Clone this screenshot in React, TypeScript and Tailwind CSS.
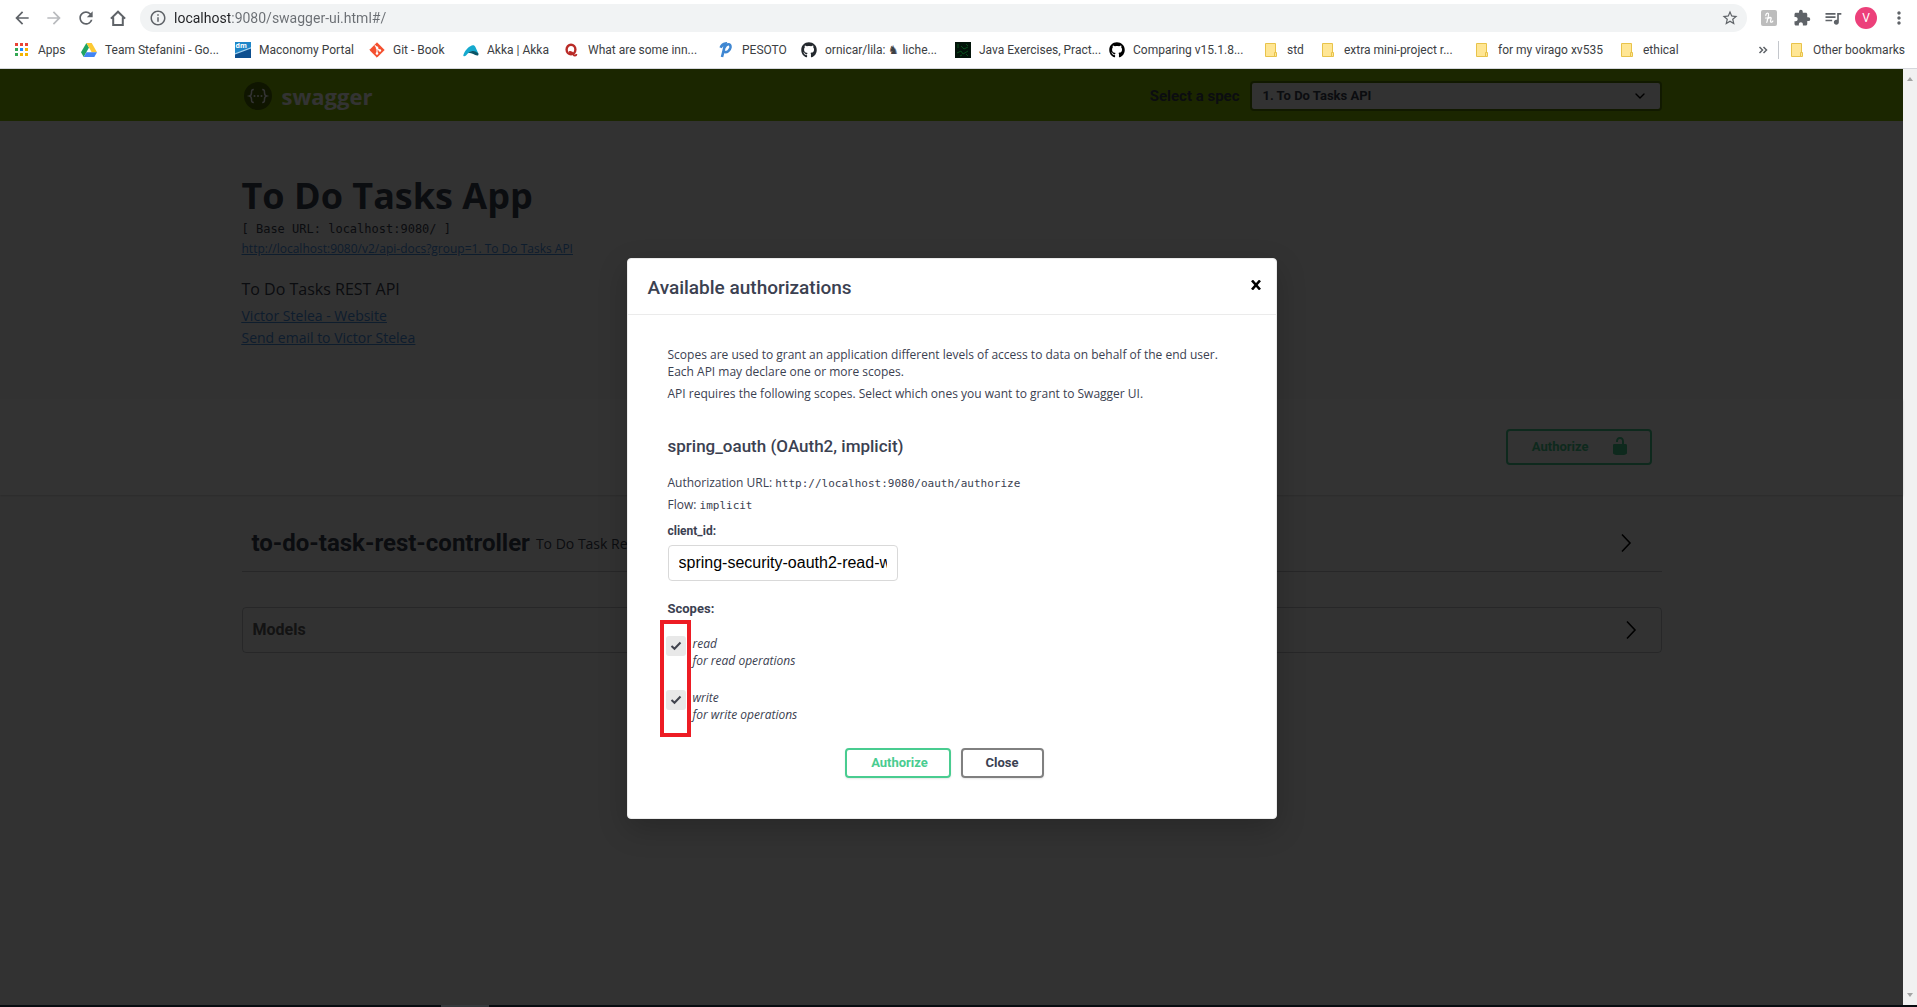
import type { ReactNode } from "react";
import {
  MdArrowBack,
  MdArrowForward,
  MdRefresh,
  MdInfoOutline,
  MdStarBorder,
  MdExtension,
  MdQueueMusic,
  MdMoreVert,
} from "react-icons/md";
import { FaGithub } from "react-icons/fa";
import { ChevronDown } from "lucide-react";

const HomeIcon = () => (
  <svg viewBox="0 0 16 16" className="size-4" fill="none" stroke="#5f6368" strokeWidth="2">
    <path d="M.9 8.6 8 1.7l7.1 6.9M3.2 7.2V15h9.6V7.2" />
  </svg>
);

const AppsIcon = () => (
  <svg viewBox="0 0 16 16" className="size-4">
    {["#ea4335", "#ea4335", "#ea4335", "#34a853", "#1a8cff", "#f4b400", "#34a853", "#f4b400", "#f4b400"].map((c, i) => (
      <rect key={i} x={1 + (i % 3) * 5} y={1 + Math.floor(i / 3) * 5} width="3" height="3" fill={c} />
    ))}
  </svg>
);

const DriveIcon = () => (
  <svg viewBox="0 0 16 16" className="size-4">
    <path d="M5.4 1 0 10.3 2.7 15 8 5.6z" fill="#1fa463" />
    <path d="M5.4 1h5.3L16 10.2h-5.3z" fill="#fcc934" />
    <path d="M2.7 15 5.4 10.2H16L13.3 15z" fill="#4285f4" />
  </svg>
);

const MaconomyIcon = () => (
  <svg viewBox="0 0 16 16" className="size-4">
    <rect width="16" height="16" fill="#1e86c8" />
    <path d="M0 11.5 16 6v10H0z" fill="#0d4f8f" />
    <path d="M0 11.2 16 5.2v1.4L0 12.4z" fill="#a9d6f2" />
    <text x="0.5" y="6" fontSize="7" fontWeight="700" fill="#fff" fontFamily="Open Sans, sans-serif">dm</text>
  </svg>
);

const GitIcon = () => (
  <svg viewBox="0 0 16 16" className="size-4">
    <path d="M8 0.8 15.2 8 8 15.2 0.8 8z" fill="#f4502f" stroke="#f4502f" strokeLinejoin="round" />
    <path d="M5.8 3.4 8 5.6V11.6M8 6l2.8 2.6" stroke="#fff" strokeWidth="1.1" fill="none" />
    <circle cx="8" cy="5.7" r="1.3" fill="#fff" />
    <circle cx="8" cy="11.5" r="1.3" fill="#fff" />
    <circle cx="10.9" cy="8.5" r="1.3" fill="#fff" />
  </svg>
);

const AkkaIcon = () => (
  <svg viewBox="0 0 16 16" className="size-4">
    <path d="M.3 13.2C2 7.5 7 3.5 9.8 3.2c1.5 0 2 .6 2.6 1.8L15.600 12C12 8.500 6.500 8.500 3 13.400 1.800 14.600.200 14.400.3 13.200z" fill="#15a9ce" />
    <path d="M5.2 10.800C9 7.900 13 8.500 15.200 11.300c.8 1.300.1 2.500-1.100 2.300C11.500 13.200 9.500 11 5.200 10.800z" fill="#0b5567" />
  </svg>
);

const QuoraIcon = () => (
  <svg viewBox="0 0 16 16" className="size-4" fill="none" stroke="#b92b27">
    <ellipse cx="7" cy="7.500" rx="4.400" ry="4.700" strokeWidth="2.400" />
    <path d="M5 10.200c2.400-.8 3.600.7 4.400 2.300.7 1.500 2.700 1.600 3.100-.5" strokeWidth="1.800" />
  </svg>
);

const PesotoIcon = () => (
  <svg viewBox="0 0 16 16" className="size-4" fill="none" stroke="#3f87d2">
    <path d="M2.600 5.800C3.500 3.600 5.200 2 7.400 1.600 6.400 5 5.200 10.500 4 15" strokeWidth="2.600" />
    <path d="M6.500 5.500c2-4.500 6.500-4.200 6-.3C12 8.500 9 11 5.800 9.800" strokeWidth="2.600" />
  </svg>
);

const JavaExercisesIcon = () => (
  <svg viewBox="0 0 16 16" className="size-4">
    <rect width="16" height="16" fill="#03140a" />
    <path d="M3 2v4M6 4l3 3 4-2M2 11l4-2 2 3 5-3M5 14l2-1M11 2l2 2M11 12l2 2" stroke="#0a4f1d" fill="none" />
  </svg>
);

const FolderIcon = () => (
  <svg viewBox="0 0 16 16" className="size-4">
    <path d="M2.500 1.500h10v13h-10z" fill="#ffe694" stroke="#e8c34a" />
    <path d="M11.500 10.500h2v4h-2z" fill="#ffe694" stroke="#e8c34a" />
  </svg>
);

const HoneyIcon = () => (
  <svg viewBox="0 0 16 16" className="size-4">
    <rect width="16" height="16" rx="2" fill="#bdbdbd" />
    <path d="M4.800 5.600C4.800 3.500 6.300 2.600 7.300 3.400 8.200 4.600 6.800 8.500 5.800 12.400M6.300 9.500c1.500-2.400 3.900-2.800 3.900-1.300 0 1-1.200 2.600-.6 3.700.6.700 1.700.1 2.200-.8M4.500 8h5" stroke="#fff" strokeWidth="1.200" fill="none" strokeLinecap="round" />
  </svg>
);

const SwaggerMark = () => (
  <svg viewBox="0 0 28 28" className="size-7">
    <circle cx="14" cy="14" r="14" fill="#4a6a02" />
    <g fill="none" stroke="#fff" strokeWidth="1.500">
      <path d="M9.800 7.500c-2.300 0-2.300 1-2.300 3.200 0 2-.3 2.800-2 3.300 1.700.5 2 1.300 2 3.300 0 2.200 0 3.200 2.300 3.200" />
      <path d="M18.200 7.500c2.300 0 2.300 1 2.300 3.200 0 2 .3 2.800 2 3.300-1.700.5-2 1.300-2 3.300 0 2.200 0 3.200-2.300 3.200" />
    </g>
    <g fill="#fff">
      <circle cx="10.500" cy="14" r="1" />
      <circle cx="14" cy="14" r="1" />
      <circle cx="17.500" cy="14" r="1" />
    </g>
  </svg>
);

const ArrowRight = () => (
  <svg viewBox="0 0 20 20" className="size-5" fill="none" stroke="#000" strokeWidth="1.600">
    <path d="M6 1.500 14 10 6 18.500" />
  </svg>
);

type Bookmark = { label: ReactNode; icon: ReactNode; width: string };

const bookmarks: Bookmark[] = [
  { label: "Apps", icon: <AppsIcon />, width: "w-[67px]" },
  { label: "Team Stefanini - Go...", icon: <DriveIcon />, width: "w-[154px]" },
  { label: "Maconomy Portal", icon: <MaconomyIcon />, width: "w-[134px]" },
  { label: "Git - Book", icon: <GitIcon />, width: "w-[94px]" },
  { label: "Akka | Akka", icon: <AkkaIcon />, width: "w-[101px]" },
  { label: "What are some inn...", icon: <QuoraIcon />, width: "w-[154px]" },
  { label: "PESOTO", icon: <PesotoIcon />, width: "w-[83px]" },
  { label: "ornicar/lila: ♞ liche...", icon: <FaGithub className="size-4 text-[#24292e]" />, width: "w-[154px]" },
  { label: "Java Exercises, Pract...", icon: <JavaExercisesIcon />, width: "w-[154px]" },
  { label: "Comparing v15.1.8...", icon: <FaGithub className="size-4 text-black" />, width: "w-[154px]" },
  { label: "std", icon: <FolderIcon />, width: "w-[57px]" },
  { label: "extra mini-project r...", icon: <FolderIcon />, width: "w-[154px]" },
  { label: "for my virago xv535", icon: <FolderIcon />, width: "w-[145px]" },
  { label: "ethical", icon: <FolderIcon />, width: "w-[60px]" },
];

function BrowserChrome() {
  return (
    <div className="border-b border-[#d5d7dc] bg-white font-['Roboto',sans-serif] text-[#3c4043]">
      <div className="flex h-9 items-center pr-2 pl-3">
        <div className="flex shrink-0 items-center gap-3 text-[#5f6368]">
          <button aria-label="Back"><MdArrowBack className="size-5" /></button>
          <button aria-label="Forward" className="text-[#b9bbbe]"><MdArrowForward className="size-5" /></button>
          <button aria-label="Reload"><MdRefresh className="size-5" /></button>
          <button aria-label="Home" className="flex w-5 justify-center"><HomeIcon /></button>
        </div>
        <div className="ml-3 flex h-7 flex-1 items-center rounded-full bg-[#f1f3f4] pr-2 pl-[9px] text-[#5f6368]">
          <MdInfoOutline className="size-[18px] shrink-0" />
          <input
            aria-label="Address"
            defaultValue="localhost:9080/swagger-ui.html#/"
            className="ml-[7px] min-w-0 flex-1 bg-[linear-gradient(90deg,#202124_56px,#6a6e73_56px)] bg-clip-text text-[14px] text-transparent outline-none"
          />
          <button aria-label="Bookmark this page"><MdStarBorder className="size-[18px]" /></button>
        </div>
        <div className="ml-3.5 flex shrink-0 items-center text-[#5f6368]">
          <button aria-label="Honey"><HoneyIcon /></button>
          <button aria-label="Extensions" className="ml-4"><MdExtension className="size-[18px]" /></button>
          <button aria-label="Media" className="ml-3"><MdQueueMusic className="size-5" /></button>
          <button aria-label="Profile" className="ml-3 flex size-[22px] items-center justify-center rounded-full bg-[#ec407a] text-[12px] text-white">V</button>
          <button aria-label="Menu" className="ml-3"><MdMoreVert className="size-5" /></button>
        </div>
      </div>
      <nav className="flex h-8 items-center pb-1 text-[12px]">
        <div className="flex min-w-0 flex-1 pl-3.5">
          {bookmarks.map((b, i) => (
            <a key={i} href="#" className={`flex shrink-0 items-center gap-2 whitespace-nowrap ${b.width}`}>
              <span className="shrink-0">{b.icon}</span>
              <span>{b.label}</span>
            </a>
          ))}
        </div>
        <button aria-label="More bookmarks" className="mr-2.5">
          <svg viewBox="0 0 10 8" className="h-2 w-2.5" fill="none" stroke="#5f6368" strokeWidth="1.500">
            <path d="M1.500 1 4.500 4 1.500 7M5.500 1 8.500 4 5.500 7" />
          </svg>
        </button>
        <a href="#" className="flex items-center gap-2 border-l border-[#c4c7cc] pr-3 pl-2.5 whitespace-nowrap">
          <FolderIcon />
          Other bookmarks
        </a>
      </nav>
    </div>
  );
}

function SwaggerPage() {
  return (
    <div className="h-full bg-[#fafafa] text-[#3b4151]">
      <header className="bg-[#89bf04]">
        <div className="mx-auto flex h-[52px] max-w-[1460px] items-center justify-between px-5 pt-0.5">
          <a href="#" className="flex items-center gap-2.5 pl-0.5 font-['Open_Sans',sans-serif] text-[22px] font-bold text-white">
            <SwaggerMark />
            swagger
          </a>
          <div className="flex items-center gap-2.5">
            <label htmlFor="spec" className="font-['Roboto',sans-serif] text-[15px] font-bold">Select a spec</label>
            <div className="relative">
              <select
                id="spec"
                className="block h-[30px] w-[412px] appearance-none rounded-sm border-2 border-[#547f00] bg-[#f7f7f7] pl-[11px] font-['Roboto',sans-serif] text-[13px] font-bold"
              >
                <option>1. To Do Tasks API</option>
              </select>
              <ChevronDown className="pointer-events-none absolute top-[7px] right-3.5 size-4 text-black" />
            </div>
          </div>
        </div>
      </header>

      <section className="mx-auto max-w-[1460px] px-5 pt-[50px] pb-[50px] font-['Open_Sans',sans-serif]">
        <h1 className="text-[36px] leading-[50px] font-bold">To Do Tasks App</h1>
        <pre className="font-['DejaVu_Sans_Mono',monospace] text-[12px] leading-4">[ Base URL: localhost:9080/ ]</pre>
        <a href="#" className="block w-fit text-[12px] leading-6 text-[#4990e2] underline">http://localhost:9080/v2/api-docs?group=1. To Do Tasks API</a>
        <p className="mt-4 text-[16px] leading-6">To Do Tasks REST API</p>
        <div className="mt-1 text-[14px] leading-[22px] text-[#4990e2] underline">
          <a href="#" className="block w-fit">Victor Stelea - Website</a>
          <a href="#" className="block w-fit">Send email to Victor Stelea</a>
        </div>
      </section>

      <section className="bg-white shadow-[0_1px_2px_rgba(0,0,0,0.15)]">
        <div className="mx-auto flex max-w-[1460px] justify-end px-5 py-[30px]">
          <button className="mr-2.5 flex h-9 items-center gap-[21px] rounded border-2 border-[#49cc90] pr-5 pl-6 font-['Roboto',sans-serif] text-[13px] font-bold text-[#49cc90]">
            Authorize
            <svg viewBox="0 0 20 20" className="mb-0.5 size-5" fill="#49cc90">
              <path d="M15.800 8H14V5.600C14 2.700 12.665 1 10 1 7.334 1 6 2.700 6 5.600V6h2v-.8C8 3.754 8.797 3 10 3c1.203 0 2 .754 2 2.200V8H4c-.553 0-1 .646-1 1.199V17c0 .549.428 1.139.951 1.307l1.197.387C5.672 18.861 6.550 19 7.100 19h5.800c.549 0 1.428-.139 1.951-.307l1.196-.387c.524-.167.953-.757.953-1.306V9.199C17 8.646 16.352 8 15.800 8z" />
            </svg>
          </button>
        </div>
      </section>

      <section className="mx-auto max-w-[1460px] px-5 pt-6">
        <div className="flex h-[53px] items-center border-b border-[rgba(59,65,81,0.3)] pr-[26px] pb-1 pl-2.5">
          <h2 className="font-['Roboto',sans-serif] text-[24px] font-bold">to-do-task-rest-controller</h2>
          <span className="ml-1.5 flex-1 font-['Open_Sans',sans-serif] text-[14px]">To Do Task Rest Controller</span>
          <button aria-label="Expand operations"><ArrowRight /></button>
        </div>
        <div className="mt-[35px] flex h-[46px] items-center justify-between rounded border border-[rgba(59,65,81,0.3)] pr-5 pl-2.5">
          <h2 className="font-['Roboto',sans-serif] text-[16px] font-bold text-[#606060]">Models</h2>
          <button aria-label="Expand models"><ArrowRight /></button>
        </div>
      </section>
    </div>
  );
}

function Scope({ name, description }: { name: string; description: string }) {
  return (
    <label className="-ml-0.5 flex h-[54px] gap-[7px]">
      <span className="relative mt-px size-5 shrink-0">
        <input type="checkbox" defaultChecked className="peer block size-5 appearance-none rounded-[3px] bg-[#e8e8e8]" />
        <svg viewBox="0 0 20 20" className="pointer-events-none absolute inset-0 hidden size-5 peer-checked:block" fill="none" stroke="#41444e" strokeWidth="2">
          <path d="M5.500 10 8.500 12.800 14.500 6.500" />
        </svg>
      </span>
      <span className="text-[12px] leading-[17px] italic">
        {name}
        <br />
        {description}
      </span>
    </label>
  );
}

function AuthDialog() {
  return (
    <div
      role="dialog"
      aria-labelledby="dialog-title"
      className="w-full max-w-[650px] rounded border border-[#ebebeb] bg-white font-['Open_Sans',sans-serif] text-[12px] text-[#3b4151] shadow-[0_10px_30px_rgba(0,0,0,0.2)]"
    >
      <div className="flex h-14 items-center justify-between border-b border-[#ebebeb] pt-1 pr-[15px] pl-5">
        <h3 id="dialog-title" className="font-['Roboto',sans-serif] text-[19px] font-medium">Available authorizations</h3>
        <button aria-label="Close dialog" className="mb-2">
          <svg viewBox="0 0 10 10" className="size-2.5" stroke="#000" strokeWidth="2.600">
            <path d="M1 0.500 9 9.500M9 0.500 1 9.500" />
          </svg>
        </button>
      </div>
      <div className="px-10 pt-[31px] pb-10">
        <p className="leading-[17px]">
          Scopes are used to grant an application different levels of access to data on behalf of the end user. Each API may declare one or more scopes.
        </p>
        <p className="mt-[5px] leading-[17px]">API requires the following scopes. Select which ones you want to grant to Swagger UI.</p>
        <h4 className="mt-8 font-['Roboto',sans-serif] text-[17px] leading-6 font-medium">spring_oauth (OAuth2, implicit)</h4>
        <p className="mt-4 leading-[17px]">
          Authorization URL: <code className="font-['DejaVu_Sans_Mono',monospace] text-[11px] leading-none">http://localhost:9080/oauth/authorize</code>
        </p>
        <p className="mt-[5px] leading-[17px]">
          Flow: <code className="font-['DejaVu_Sans_Mono',monospace] text-[11px] leading-none">implicit</code>
        </p>
        <label htmlFor="client_id" className="mt-2 block font-['Roboto',sans-serif] leading-5 font-bold">client_id:</label>
        <input
          id="client_id"
          defaultValue="spring-security-oauth2-read-write-client"
          className="mt-1 block h-9 w-[230px] rounded border border-[#d9d9d9] px-2.5 font-['Liberation_Sans',sans-serif] text-[16px] text-black"
        />
        <h5 className="mt-[18px] font-['Roboto',sans-serif] text-[13px] leading-5 font-bold">Scopes:</h5>
        <div className="relative mt-4 h-[104px]">
          <Scope name="read" description="for read operations" />
          <Scope name="write" description="for write operations" />
          <div className="pointer-events-none absolute -top-[15px] -left-2 h-[117px] w-[31px] border-4 border-[#ed1c24]" />
        </div>
        <div className="mt-[9px] mr-[15px] flex justify-center gap-2.5 font-['Roboto',sans-serif] text-[13px] font-bold">
          <button className="h-[30px] w-[106px] rounded border-2 border-[#49cc90] pl-1 text-[#49cc90] shadow-[0_1px_2px_rgba(0,0,0,0.1)]">Authorize</button>
          <button className="h-[30px] w-[83px] rounded border-2 border-[#808080] shadow-[0_1px_2px_rgba(0,0,0,0.1)]">Close</button>
        </div>
      </div>
    </div>
  );
}

export default function App() {
  return (
    <div className="flex min-h-screen flex-col">
      <BrowserChrome />
      <main className="flex flex-1">
        <div className="relative flex-1">
          <SwaggerPage />
          <div className="absolute inset-0 flex items-center justify-center bg-black/80 pt-[3px]">
            <AuthDialog />
          </div>
        </div>
        <div className="flex w-3.5 flex-col items-center justify-between bg-[#f1f1f1] py-2">
          <svg viewBox="0 0 6 4" className="h-1 w-1.5" fill="#a3a3a3"><path d="M3 0 6 4H0z" /></svg>
          <svg viewBox="0 0 6 4" className="h-1 w-1.5" fill="#a3a3a3"><path d="M3 4 6 0H0z" /></svg>
        </div>
      </main>
      <div className="flex h-0.5 bg-[#080c10] pl-[441px]">
        <div className="w-12 bg-[#35393c]" />
      </div>
    </div>
  );
}
